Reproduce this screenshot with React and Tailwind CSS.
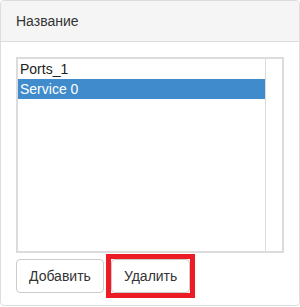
export default function App() {
  const items = [
    { name: "Ports_1", selected: false },
    { name: "Service 0", selected: true },
  ];

  return (
    <div className="w-[300px] h-[307px] bg-white font-['Liberation_Sans',Arial,sans-serif] text-[14px] leading-5 text-[#333]">
      <div className="w-[300px] h-[306px] border border-[#dddddd] rounded-[4px] flex flex-col">
        {/* Header */}
        <div className="h-[41px] px-[15px] py-[10px] bg-[#f5f5f5] border-b border-[#dddddd] rounded-t-[3px]">
          Название
        </div>

        {/* Body */}
        <div className="px-[15px] pt-[15px] flex flex-col">
          <div className="h-[196px] border-2 border-[#dcdcdc] flex">
            <div className="flex-1 flex flex-col">
              {items.map((item) => (
                <div
                  key={item.name}
                  className={`h-5 pl-[2px] leading-5 ${
                    item.selected ? "bg-[#3f8bcb] text-white" : "text-[#222]"
                  }`}
                >
                  {item.name}
                </div>
              ))}
            </div>
            <div className="w-[17px] border-l border-[#dcdcdc] bg-white" />
          </div>

          <div className="mt-[1px] flex items-center gap-[2px]">
            <button className="h-[34px] px-3 border border-[#cccccc] rounded-[4px] bg-white text-[#333]">
              Добавить
            </button>
            {/* highlighted action */}
            <div className="border-[5px] border-[#ed1c24]">
              <button className="h-[34px] px-3 border border-[#cccccc] rounded-[4px] bg-white text-[#333] block">
                Удалить
              </button>
            </div>
          </div>
        </div>
      </div>
    </div>
  );
}
